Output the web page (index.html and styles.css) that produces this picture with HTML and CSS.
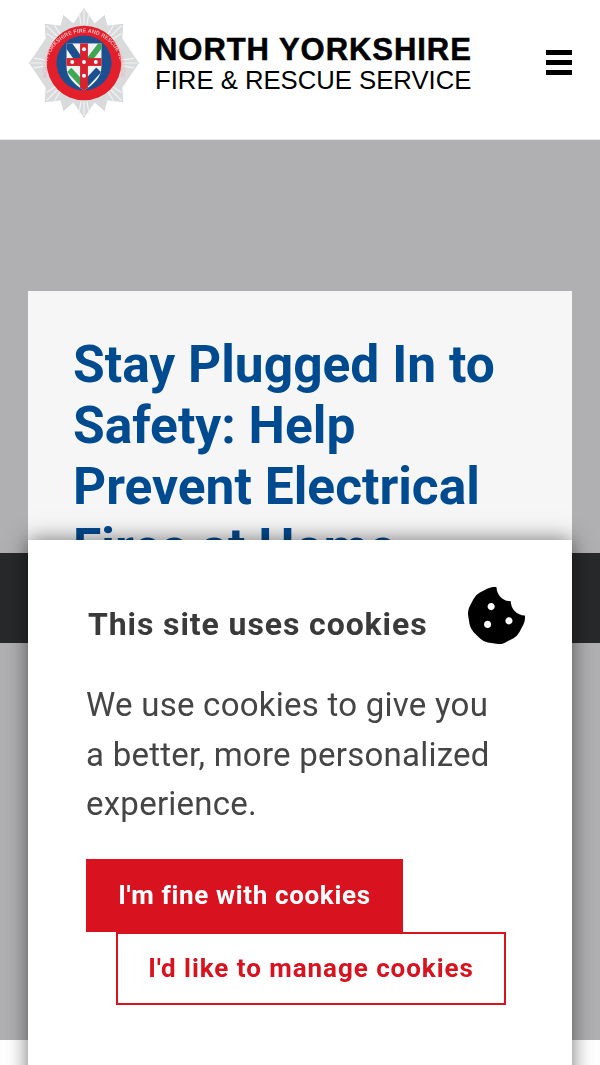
FILE: index.html
```html
<!DOCTYPE html>
<html lang="en">
<head>
<meta charset="UTF-8" />
<meta name="viewport" content="width=device-width, initial-scale=1" />
<title>Stay Plugged In to Safety - North Yorkshire Fire &amp; Rescue Service</title>
<link rel="stylesheet" href="styles.css">
</head>
<body>

<header class="site-header">
  <a class="brand" href="#">
    <svg class="badge" viewBox="0 0 114 114" aria-hidden="true">
      <defs>
        <path id="ring-text" d="M21 76 A38 38 0 1 1 93 76" />
        <clipPath id="shield-clip"><path d="M39 37 H75 V60 C75 72 66 79 57 85 C48 79 39 72 39 60 Z" /></clipPath>
      </defs>
      <polygon class="star" points="57,1 65,19 78,8 82,24 97,17 96,32 113,57 96,82 97,97 82,90 78,106 65,95 57,113 49,95 36,106 32,90 17,97 18,82 1,57 18,32 17,17 32,24 36,8 49,19" />
      <polygon class="star" points="57,1 70,20 97,17 94,44 113,57 94,70 97,97 70,94 57,113 44,94 17,97 20,70 1,57 20,44 17,17 44,20" />
      <g class="rays">
        <path d="M57 3 V18 M52 6 L54 18 M62 6 L60 18 M57 111 V96 M52 108 L54 96 M62 108 L60 96" />
        <path d="M3 57 H18 M6 52 L18 54 M6 62 L18 60 M111 57 H96 M108 52 L96 54 M108 62 L96 60" />
        <path d="M19 19 L30 30 M19 27 L28 33 M27 19 L33 28 M95 19 L84 30 M95 27 L86 33 M87 19 L81 28" />
        <path d="M19 95 L30 84 M19 87 L28 81 M27 95 L33 86 M95 95 L84 84 M95 87 L86 81 M87 95 L81 86" />
      </g>
      <circle cx="57" cy="57" r="38" fill="#e21f2b" />
      <circle cx="57" cy="57" r="28" fill="#1c4f8f" />
      <text class="ring-label"><textPath href="#ring-text" startOffset="50%" text-anchor="middle">NORTH YORKSHIRE FIRE AND RESCUE SERVICE</textPath></text>
      <g clip-path="url(#shield-clip)">
        <rect x="36" y="34" width="42" height="54" fill="#f3f3f3" />
        <path d="M38 34 L55 58" stroke="#1c4f8f" stroke-width="8" />
        <path d="M76 36 L59 58" stroke="#3fa654" stroke-width="6" />
        <path d="M42 64 L55 78" stroke="#3fa654" stroke-width="6" />
        <path d="M72 64 L59 78" stroke="#1c4f8f" stroke-width="7" />
        <rect x="53" y="34" width="8" height="54" fill="#d8222e" />
        <rect x="36" y="52" width="42" height="8" fill="#d8222e" />
        <circle cx="57" cy="56" r="2" fill="#fff" />
        <circle cx="45" cy="56" r="2" fill="#fff" />
        <circle cx="69" cy="56" r="2" fill="#fff" />
        <circle cx="57" cy="43" r="2" fill="#fff" />
        <circle cx="57" cy="70" r="2" fill="#fff" />
      </g>
    </svg>
    <span class="brand-text">
      <strong>NORTH YORKSHIRE</strong>
      <span>FIRE &amp; RESCUE SERVICE</span>
    </span>
  </a>
  <button class="menu-btn" aria-label="Menu">
    <span></span><span></span><span></span>
  </button>
</header>

<main>
  <section class="hero">
    <div class="hero-card">
      <h1>Stay Plugged In to Safety: Help Prevent Electrical Fires at Home</h1>
    </div>
  </section>
  <div class="dark-band"></div>
  <section class="grey-block"></section>
</main>

<aside class="cookie-box">
  <div class="cookie-head">
    <h2>This site uses cookies</h2>
    <svg class="cookie-icon" viewBox="0 0 512 512" aria-hidden="true">
      <path d="M510.52 255.82c-69.97-.85-126.47-57.69-126.47-127.86-70.17 0-127-56.49-127.86-126.45-27.26-4.14-55.13.3-79.72 12.82l-69.13 35.22a132.221 132.221 0 0 0-57.79 57.81l-35.1 68.88a132.645 132.645 0 0 0-12.82 80.95l12.08 76.27a132.521 132.521 0 0 0 37.16 72.96l54.77 54.76a132.036 132.036 0 0 0 72.71 37.06l76.71 12.15c27.51 4.36 55.7-.11 80.53-12.76l69.13-35.21a132.273 132.273 0 0 0 57.79-57.81l35.1-68.88c12.56-24.64 17.01-52.58 12.91-79.91zM176 368c-17.67 0-32-14.33-32-32s14.33-32 32-32 32 14.33 32 32-14.33 32-32 32zm32-160c-17.67 0-32-14.33-32-32s14.33-32 32-32 32 14.33 32 32-14.33 32-32 32zm160 128c-17.67 0-32-14.33-32-32s14.33-32 32-32 32 14.33 32 32-14.33 32-32 32z" />
    </svg>
  </div>
  <p>We use cookies to give you a better, more personalized experience.</p>
  <div class="cookie-actions">
    <button class="btn-accept">I'm fine with cookies</button>
    <button class="btn-manage">I'd like to manage cookies</button>
  </div>
</aside>

</body>
</html>
```

FILE: styles.css
```css
* {
  box-sizing: border-box;
  margin: 0;
  padding: 0;
}

html, body {
  height: 1065px;
  overflow: hidden;
}

body {
  background: #fff;
  font-family: Roboto, "Liberation Sans", sans-serif;
}

.site-header {
  height: 140px;
  padding: 0 28px;
  display: flex;
  align-items: center;
  justify-content: space-between;
  background: #fff;
  border-bottom: 1px solid #e6e6e6;
}

.brand {
  display: flex;
  align-items: center;
  gap: 15px;
  color: #000;
  text-decoration: none;
  margin-top: -13px;
}

.badge {
  width: 112px;
  height: 112px;
  flex: none;
  filter: blur(0.5px);
}

.star {
  fill: #d9dadb;
}

.rays path {
  fill: none;
  stroke: #f2f3f3;
  stroke-width: 1.2;
}

.ring-label {
  font-family: "Liberation Sans", sans-serif;
  font-size: 5.6px;
  font-weight: 700;
  fill: #f2b9bd;
}

.brand-text {
  display: flex;
  flex-direction: column;
  font-family: "Liberation Sans", sans-serif;
  margin-top: 1px;
  white-space: nowrap;
}

.brand-text strong {
  font-size: 31px;
  line-height: 33px;
  letter-spacing: 0.95px;
  -webkit-text-stroke: 0.5px #000;
}

.brand-text span {
  font-size: 25.7px;
  line-height: 29px;
}

.menu-btn {
  width: 26px;
  display: flex;
  flex-direction: column;
  gap: 5px;
  background: none;
  border: none;
  margin-top: -15px;
}

.menu-btn span {
  height: 5px;
  background: #000;
}

.hero {
  height: 413px;
  padding: 151px 28px 0;
  background: #b0b0b2;
}

.hero-card {
  height: 300px;
  padding: 43px 45px;
  background: #f6f6f7;
}

.hero-card h1 {
  font-size: 51.5px;
  line-height: 61px;
  font-weight: 700;
  color: #004a8f;
}

.dark-band {
  height: 90px;
  background: #28292b;
}

.grey-block {
  height: 397px;
  background: #b0b0b2;
}

.cookie-box {
  position: fixed;
  top: 540px;
  left: 28px;
  width: 544px;
  height: 560px;
  padding: 47px 46px 0 60px;
  background: #fff;
  box-shadow: 0 0 20px rgba(0, 0, 0, 0.55);
}

.cookie-head {
  display: flex;
  justify-content: space-between;
  align-items: flex-start;
}

.cookie-head h2 {
  margin-top: 15px;
  font-size: 32px;
  line-height: 44px;
  font-weight: 700;
  letter-spacing: 0.9px;
  color: #3a3a3b;
}

.cookie-icon {
  width: 57px;
  height: 57px;
  flex: none;
  margin-right: 1px;
  margin-left: -1px;
}

.cookie-box p {
  margin: 34px 20px 0 -2px;
  font-size: 33px;
  line-height: 49.5px;
  font-weight: 400;
  letter-spacing: 0.25px;
  color: #454546;
}

.cookie-actions {
  margin: 30px 0 0 -2px;
  display: flex;
  flex-direction: column;
  align-items: flex-start;
}

.cookie-actions button {
  height: 73px;
  font-family: Roboto, "Liberation Sans", sans-serif;
  font-size: 26px;
  font-weight: 700;
}

.btn-accept {
  width: 317px;
  background: #d9121f;
  border: none;
  color: #fff;
  letter-spacing: 0.65px;
}

.btn-manage {
  width: 390px;
  margin-left: 30px;
  background: #fff;
  border: 2px solid #d9121f;
  color: #d9121f;
  letter-spacing: 0.95px;
}
```
